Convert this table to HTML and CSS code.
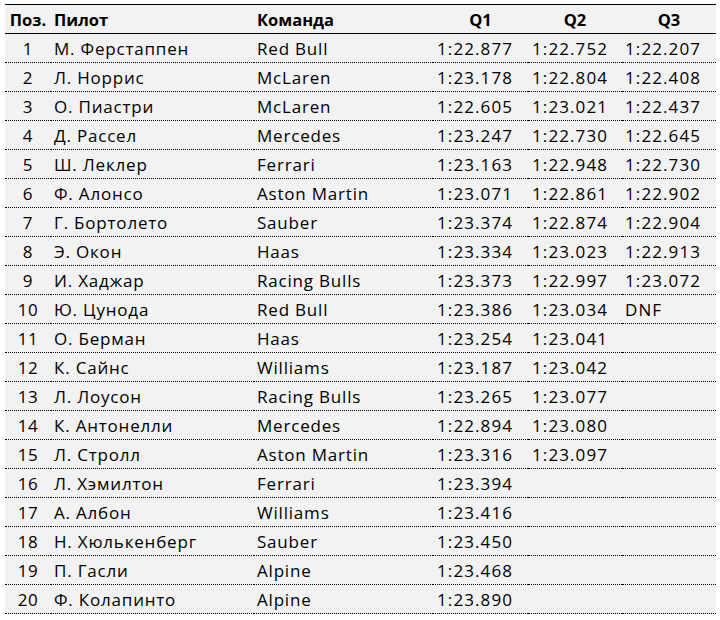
FILE: index.html
```html
<!DOCTYPE html>
<html lang="ru">
<head>
<meta charset="utf-8">
<title>Квалификация</title>
<link rel="stylesheet" href="styles.css">
</head>
<body>
<table class="results">
  <colgroup>
    <col class="c-pos"><col class="c-driver"><col class="c-team"><col class="c-q1"><col class="c-q2"><col class="c-q3">
  </colgroup>
  <thead>
    <tr><th class="pos">Поз.</th><th class="txt">Пилот</th><th class="txt">Команда</th><th class="q">Q1</th><th class="q">Q2</th><th class="q">Q3</th></tr>
  </thead>
  <tbody>
    <tr><td class="pos">1</td><td class="txt">М. Ферстаппен</td><td class="txt">Red Bull</td><td class="t">1:22.877</td><td class="t">1:22.752</td><td class="t t3">1:22.207</td></tr>
    <tr><td class="pos">2</td><td class="txt">Л. Норрис</td><td class="txt">McLaren</td><td class="t">1:23.178</td><td class="t">1:22.804</td><td class="t t3">1:22.408</td></tr>
    <tr><td class="pos">3</td><td class="txt">О. Пиастри</td><td class="txt">McLaren</td><td class="t">1:22.605</td><td class="t">1:23.021</td><td class="t t3">1:22.437</td></tr>
    <tr><td class="pos">4</td><td class="txt">Д. Рассел</td><td class="txt">Mercedes</td><td class="t">1:23.247</td><td class="t">1:22.730</td><td class="t t3">1:22.645</td></tr>
    <tr><td class="pos">5</td><td class="txt">Ш. Леклер</td><td class="txt">Ferrari</td><td class="t">1:23.163</td><td class="t">1:22.948</td><td class="t t3">1:22.730</td></tr>
    <tr><td class="pos">6</td><td class="txt">Ф. Алонсо</td><td class="txt">Aston Martin</td><td class="t">1:23.071</td><td class="t">1:22.861</td><td class="t t3">1:22.902</td></tr>
    <tr><td class="pos">7</td><td class="txt">Г. Бортолето</td><td class="txt">Sauber</td><td class="t">1:23.374</td><td class="t">1:22.874</td><td class="t t3">1:22.904</td></tr>
    <tr><td class="pos">8</td><td class="txt">Э. Окон</td><td class="txt">Haas</td><td class="t">1:23.334</td><td class="t">1:23.023</td><td class="t t3">1:22.913</td></tr>
    <tr><td class="pos">9</td><td class="txt">И. Хаджар</td><td class="txt">Racing Bulls</td><td class="t">1:23.373</td><td class="t">1:22.997</td><td class="t t3">1:23.072</td></tr>
    <tr><td class="pos">10</td><td class="txt">Ю. Цунода</td><td class="txt">Red Bull</td><td class="t">1:23.386</td><td class="t">1:23.034</td><td class="t t3">DNF</td></tr>
    <tr><td class="pos">11</td><td class="txt">О. Берман</td><td class="txt">Haas</td><td class="t">1:23.254</td><td class="t">1:23.041</td><td class="t t3"></td></tr>
    <tr><td class="pos">12</td><td class="txt">К. Сайнс</td><td class="txt">Williams</td><td class="t">1:23.187</td><td class="t">1:23.042</td><td class="t t3"></td></tr>
    <tr><td class="pos">13</td><td class="txt">Л. Лоусон</td><td class="txt">Racing Bulls</td><td class="t">1:23.265</td><td class="t">1:23.077</td><td class="t t3"></td></tr>
    <tr><td class="pos">14</td><td class="txt">К. Антонелли</td><td class="txt">Mercedes</td><td class="t">1:22.894</td><td class="t">1:23.080</td><td class="t t3"></td></tr>
    <tr><td class="pos">15</td><td class="txt">Л. Стролл</td><td class="txt">Aston Martin</td><td class="t">1:23.316</td><td class="t">1:23.097</td><td class="t t3"></td></tr>
    <tr><td class="pos">16</td><td class="txt">Л. Хэмилтон</td><td class="txt">Ferrari</td><td class="t">1:23.394</td><td class="t"></td><td class="t t3"></td></tr>
    <tr><td class="pos">17</td><td class="txt">А. Албон</td><td class="txt">Williams</td><td class="t">1:23.416</td><td class="t"></td><td class="t t3"></td></tr>
    <tr><td class="pos">18</td><td class="txt">Н. Хюлькенберг</td><td class="txt">Sauber</td><td class="t">1:23.450</td><td class="t"></td><td class="t t3"></td></tr>
    <tr><td class="pos">19</td><td class="txt">П. Гасли</td><td class="txt">Alpine</td><td class="t">1:23.468</td><td class="t"></td><td class="t t3"></td></tr>
    <tr><td class="pos">20</td><td class="txt">Ф. Колапинто</td><td class="txt">Alpine</td><td class="t">1:23.890</td><td class="t"></td><td class="t t3"></td></tr>
  </tbody>
</table>
</body>
</html>
```

FILE: styles.css
```css
html, body {
  margin: 0;
  padding: 0;
  background: #ffffff;
}

body {
  padding: 4px 0 0 5px;
  font-family: "Open Sans", "Liberation Sans", sans-serif;
  font-size: 16.5px;
  color: #000000;
}

.results {
  width: 711px;
  table-layout: fixed;
  border-collapse: separate;
  border-spacing: 0;
  background: #f2f2f2;
}

.c-pos { width: 46px; }
.c-driver { width: 203px; }
.c-team { width: 179px; }
.c-q1 { width: 95px; }
.c-q2 { width: 94px; }
.c-q3 { width: 94px; }

.results th,
.results td {
  padding: 2px 0 0 0;
  line-height: 26px;
  height: 26px;
  white-space: nowrap;
  overflow: hidden;
}

.results th {
  font-weight: 700;
  border-top: 1px solid #000000;
  border-bottom: 1px solid #000000;
}

.results td {
  font-size: 17px;
  font-weight: 400;
  letter-spacing: 1.1px;
  border-bottom: 1px dotted #000000;
}

.results .pos {
  text-align: center;
}

.results td.pos {
  letter-spacing: 0.6px;
}

.results .txt {
  text-align: left;
  padding-left: 3px;
}

.results td.txt {
  letter-spacing: 0.8px;
}

.results .q {
  text-align: center;
}

.results .t {
  text-align: left;
  padding-left: 4px;
}

.results .t3 {
  padding-left: 3px;
}
```
